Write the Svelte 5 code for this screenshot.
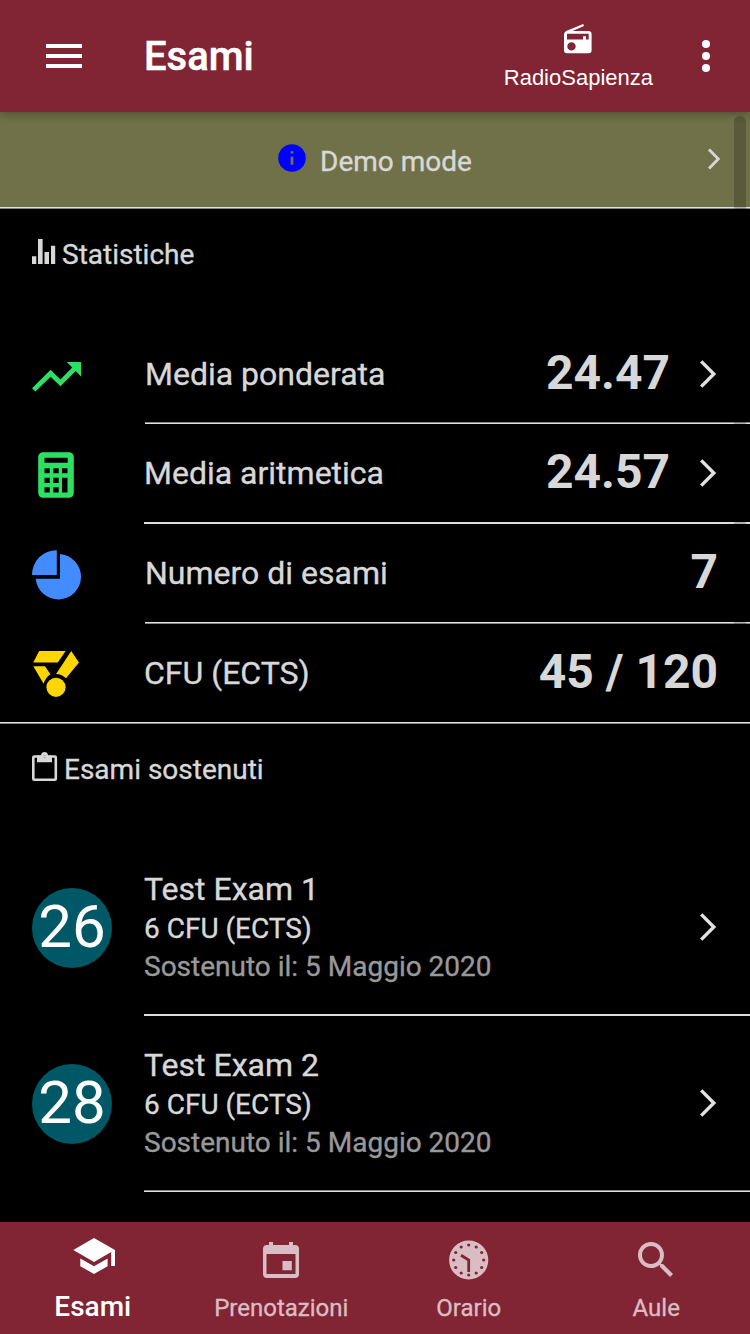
<script>
  const stats = [
    { icon: 'trend', label: 'Media ponderata', value: '24.47', link: true, line: 'low', nudge: true },
    { icon: 'calc', label: 'Media aritmetica', value: '24.57', link: true, line: 'full', up: true },
    { icon: 'pie', label: 'Numero di esami', value: '7', line: 'high', nudge: true, up: true },
    { icon: 'medal', label: 'CFU (ECTS)', value: '45 / 120', line: 'high', last: true, up: true }
  ];
  const exams = [
    { grade: 26, name: 'Test Exam 1', cfu: '6 CFU (ECTS)', date: 'Sostenuto il: 5 Maggio 2020', line: 'full' },
    { grade: 28, name: 'Test Exam 2', cfu: '6 CFU (ECTS)', date: 'Sostenuto il: 5 Maggio 2020', line: 'low' }
  ];
  const tabs = [
    { icon: 'school', label: 'Esami', active: true },
    { icon: 'event', label: 'Prenotazioni' },
    { icon: 'clock', label: 'Orario' },
    { icon: 'search', label: 'Aule' }
  ];
  const ticks = Array.from({ length: 12 }, (_, i) => {
    const a = (i * Math.PI) / 6;
    return { x: 23.7 + 15 * Math.sin(a), y: 24 - 15 * Math.cos(a) };
  });
</script>

<div class="app">
  <header>
    <svg class="menu" width="36" height="24" viewBox="0 0 36 24"><path fill="#fff" d="M0 0h36v4H0zM0 10h36v4H0zM0 20h36v4H0z" /></svg>
    <h1>Esami</h1>
    <div class="radio">
      <svg width="30" height="30" viewBox="0 0 30 30"><path fill="#fff" fill-rule="evenodd" d="M20.200 0 21 2 9.500 7H25.300Q28.600 7 28.600 10V26.300Q28.600 29.300 25.600 29.300H4Q1 29.300 1 26.300V10.500Q1 8 3.200 7zM4 9.800V15.500H20V12.300H23V15.500H25.700V9.800zM8.500 18.200a4.200 4.200 0 1 0 0 8.400 4.200 4.200 0 0 0 0-8.400z" /></svg>
      <span>RadioSapienza</span>
    </div>
    <svg class="more" width="8" height="32" viewBox="0 0 8 32"><g fill="#fff"><circle cx="4" cy="4" r="4" /><circle cx="4" cy="16" r="4" /><circle cx="4" cy="28" r="4" /></g></svg>
  </header>

  <main>
    <div class="demo">
      <div class="demo-body">
        <svg class="info" width="28" height="28" viewBox="0 0 28 28"><path fill="#00f" fill-rule="evenodd" d="M14 .2a13.800 13.800 0 1 0 0 27.600 13.800 13.800 0 0 0 0-27.600zM12.600 7.200h2.800v2.400h-2.800zM12.600 12.800h2.800v8h-2.800z" /></svg>
        <span>Demo mode</span>
        <svg class="go" width="14" height="22" viewBox="0 0 14 22"><path d="M2 1.600 11.300 11 2 20.400" fill="none" stroke="#d8d8d8" stroke-width="2.800" /></svg>
      </div>
      <i class="line high"></i>
    </div>

    <h2 class="stats-title">
      <svg width="24" height="26" viewBox="0 0 24 26"><path fill="#d8d8d8" d="M0 17.300h4.300V25H0zM6 0h4.600v25H6zM12.500 13H17v12h-4.500zM19 6.700h4.200V25H19z" /></svg>
      <span>Statistiche</span>
    </h2>

    {#each stats as s}
      <div class="stat" class:nudge={s.nudge} class:last={s.last} class:up={s.up}>
        <div class="stat-icon">
          <svg width="50" height="50" viewBox="0 0 50 50">
            {#if s.icon === 'trend'}
              <path fill="#2fdf64" d="m34.700 12 5.600 5.600L28.400 29.600 18.600 19.700 0 38.200l3.400 3.300 15.200-14.700 9.800 9.500L43.700 20.900l5.300 5.500V12z" />
            {:else if s.icon === 'calc'}
              <path fill="#2fdf64" fill-rule="evenodd" d="M11 2.200h26a4.800 4.800 0 0 1 4.800 4.800v36A4.800 4.800 0 0 1 37 47.800H11A4.800 4.800 0 0 1 6.200 43V7A4.800 4.800 0 0 1 11 2.200zM12.500 7.700h23.200v5H12.500zM12.500 18.200h5.200v5h-5.200zM21.300 18.200h5.400v5h-5.400zM30 18.200h5.500v5H30zM12.500 27.800h5.200V33h-5.200zM21.300 27.800h5.400V33h-5.400zM12.500 37.300h5.200v5.200h-5.200zM21.300 37.300h5.400v5.200h-5.400zM30 27.800h5.500v14.700H30z" />
            {:else if s.icon === 'pie'}
              <path fill="#428cff" d="M24.800.2v24.700H0A24.500 24.500 0 0 1 24.800.2zM28 4.100a22.700 22.700 0 1 1-24.300 24.700H28z" />
            {:else}
              <path fill="#ffd600" d="M7.200 1.100h26.400L25.800 12.400H1.200zM39.200 1.100 47 12.600 34 28.300Q29.500 23.900 24.100 23.900zM1.300 16.300H13l5.400 7.900q-4.900 3-6.800 9.500z" />
              <circle cx="24" cy="37.300" r="9.600" fill="#ffd600" />
            {/if}
          </svg>
        </div>
        <div class="stat-main">
          <div class="stat-body">
            <span class="label">{s.label}</span>
            <strong>{s.value}</strong>
            {#if s.link}
              <svg class="chev" width="18" height="28" viewBox="0 0 18 28"><path d="M1.200 1.400 13.800 14 1.200 26.600" fill="none" stroke="#e2e2e2" stroke-width="3.400" /></svg>
            {/if}
          </div>
          {#if !s.last}<i class="line {s.line}"></i>{/if}
        </div>
      </div>
    {/each}
    <i class="line high"></i>

    <h2 class="exam-title">
      <svg width="26" height="30" viewBox="0 0 26 30"><path fill="none" stroke="#d8d8d8" stroke-width="2.600" d="M2.500 4.500h20.300q1 0 1 1v21.300q0 1-1 1H2.300q-1 0-1-1V5.500q0-1 1-1z" /><path fill="#d8d8d8" fill-rule="evenodd" d="M5 3.400h4C9.300-1.100 15.800-1.100 16.100 3.400H20v6.800H5zM12.500 3a1.500 1.500 0 1 0 0 3 1.500 1.500 0 0 0 0-3z" /></svg>
      <span>Esami sostenuti</span>
    </h2>

    {#each exams as e}
      <div class="exam">
        <div class="grade">{e.grade}</div>
        <div class="exam-main">
          <div class="exam-body">
            <div class="texts">
              <div class="name">{e.name}</div>
              <div class="cfu">{e.cfu}</div>
              <div class="date">{e.date}</div>
            </div>
            <svg class="chev" width="18" height="28" viewBox="0 0 18 28"><path d="M1.200 1.400 13.800 14 1.200 26.600" fill="none" stroke="#e2e2e2" stroke-width="3.400" /></svg>
          </div>
          <i class="line {e.line}"></i>
        </div>
      </div>
    {/each}
    <div class="thumb"></div>
  </main>

  <nav>
    {#each tabs as t}
      <div class="tab" class:active={t.active}>
        <svg width="48" height="48" viewBox="0 0 48 48">
          {#if t.icon === 'school'}
            <path fill="currentColor" d="M10.300 22.500v7.700L24 38l13.600-7.800v-7.700L24 30.300zM24 2 3.300 14 24 26l17.200-9.900V30H45V14z" />
          {:else if t.icon === 'event'}
            <path fill="currentColor" fill-rule="evenodd" d="M12 6h4v3h16V6h4v3h2q4 0 4 4v25q0 4-4 4H10q-4 0-4-4V13q0-4 4-4h2zM9.500 18v20h29V18zM25.500 25h9.300v9.300h-9.300z" />
          {:else if t.icon === 'clock'}
            <circle cx="23.700" cy="24" r="19.600" fill="currentColor" />
            {#each ticks as p}<circle cx={p.x} cy={p.y} r="1.600" fill="#812433" />{/each}
            <path d="M16 19.200 23.700 24v12" fill="none" stroke="#812433" stroke-width="2.800" />
          {:else}
            <path fill="currentColor" d="M31 28h-1.600l-.55-.55C30.800 25.200 32 22.200 32 19c0-7.200-5.800-13-13-13S6 11.800 6 19s5.800 13 13 13c3.200 0 6.200-1.200 8.500-3.100l.55.55V31l10 10L41 38zm-12 0c-5 0-9-4-9-9s4-9 9-9 9 4 9 9-4 9-9 9z" />
          {/if}
        </svg>
        <span>{t.label}</span>
      </div>
    {/each}
  </nav>
</div>

<style>
  :global(body) { background: #000; }
  .app { width: 750px; height: 1334px; display: flex; flex-direction: column; overflow: hidden; background: #000; color: #d8d8d8; font-family: Roboto, sans-serif; }
  svg { display: block; flex: none; }
  h1, h2 { margin: 0; }
  .demo, h2, .label, .texts, .tab { -webkit-text-stroke: .35px currentColor; }
  header { height: 112px; flex: none; display: flex; align-items: center; background: #812433; color: #fff; padding: 0 40px 0 46px; box-sizing: border-box; position: relative; z-index: 1; box-shadow: 0 2px 9px rgba(0, 0, 0, .32); }
  h1 { margin-left: 62px; font-size: 40px; line-height: 48px; font-weight: 500; flex: 1; padding-top: 2px; -webkit-text-stroke: .5px currentColor; }
  .radio { display: flex; flex-direction: column; align-items: center; margin-right: 49px; height: 112px; padding-top: 24px; box-sizing: border-box; font: 22px/28px "Liberation Sans", sans-serif; }
  .radio span { margin-top: 10px; }
  main { flex: 1; min-height: 0; position: relative; overflow: hidden; }
  .demo { background: #707149; }
  .demo-body { height: 95px; display: flex; align-items: center; padding: 0 29px 0 278px; font-size: 28px; }
  .info { margin-top: -3px; }
  .demo-body span { margin: 3px auto 0 14px; }
  .go { margin-top: -2px; }
  .line { display: block; height: 2px; background: #ddd; }
  .line.low { background: linear-gradient(#858585 50%, #e2e2e2 50%); }
  .line.high { background: linear-gradient(#e2e2e2 50%, #858585 50%); }
  h2 { display: flex; font-size: 28px; line-height: 34px; font-weight: 400; box-sizing: border-box; padding-left: 32px; }
  .stats-title { height: 115px; padding-top: 30px; }
  .stats-title span { margin: -1px 0 0 6px; }
  .exam-title { height: 116px; padding-top: 28px; }
  .exam-title span { margin: 1px 0 0 6px; }
  .stat { display: flex; height: 100px; }
  .stat-icon { width: 112px; padding: 26px 0 0 32px; }
  .stat.last { height: 98px; }
  .nudge .stat-icon { width: 113px; }
  .stat-main { flex: 1; }
  .stat-body { height: 98px; display: flex; align-items: center; padding-right: 32px; box-sizing: border-box; }
  .up .stat-body { padding-bottom: 2px; }
  .label { font-size: 32px; flex: 1; padding-top: 1px; }
  strong { font-size: 48px; font-weight: 700; line-height: 56px; margin-top: -1px; }
  .chev { margin: 2px 0 0 30px; }
  .exam { display: flex; height: 176px; padding-left: 32px; }
  .grade { width: 80px; height: 80px; margin: 48px 32px 0 0; border-radius: 50%; background: #005866; color: #fff; font-size: 60px; line-height: 77px; text-align: center; }
  .exam-main { flex: 1; }
  .exam-body { height: 174px; display: flex; align-items: center; padding-right: 32px; }
  .exam .chev { margin-top: 0; }
  .texts { flex: 1; padding-top: 2px; }
  .name { font-size: 32px; line-height: 38px; margin-bottom: 2px; }
  .cfu, .date { font-size: 28px; line-height: 38px; }
  .date { color: #999; }
  .thumb { position: absolute; top: 4px; right: 4px; width: 12px; height: 560px; border-radius: 6px; background: rgba(0, 0, 0, .2); }
  nav { height: 112px; flex: none; display: grid; grid-template-columns: repeat(4, 1fr); background: #812433; }
  .tab { display: flex; flex-direction: column; align-items: center; padding-top: 14px; color: #dabdc2; font-size: 24px; line-height: 28px; }
  .tab span { margin-top: 10px; }
  .tab.active { color: #fff; font-size: 28px; line-height: 32px; font-weight: 500; -webkit-text-stroke: 0; }
  .tab.active span { margin: 7px 2px 0 0; }
</style>
